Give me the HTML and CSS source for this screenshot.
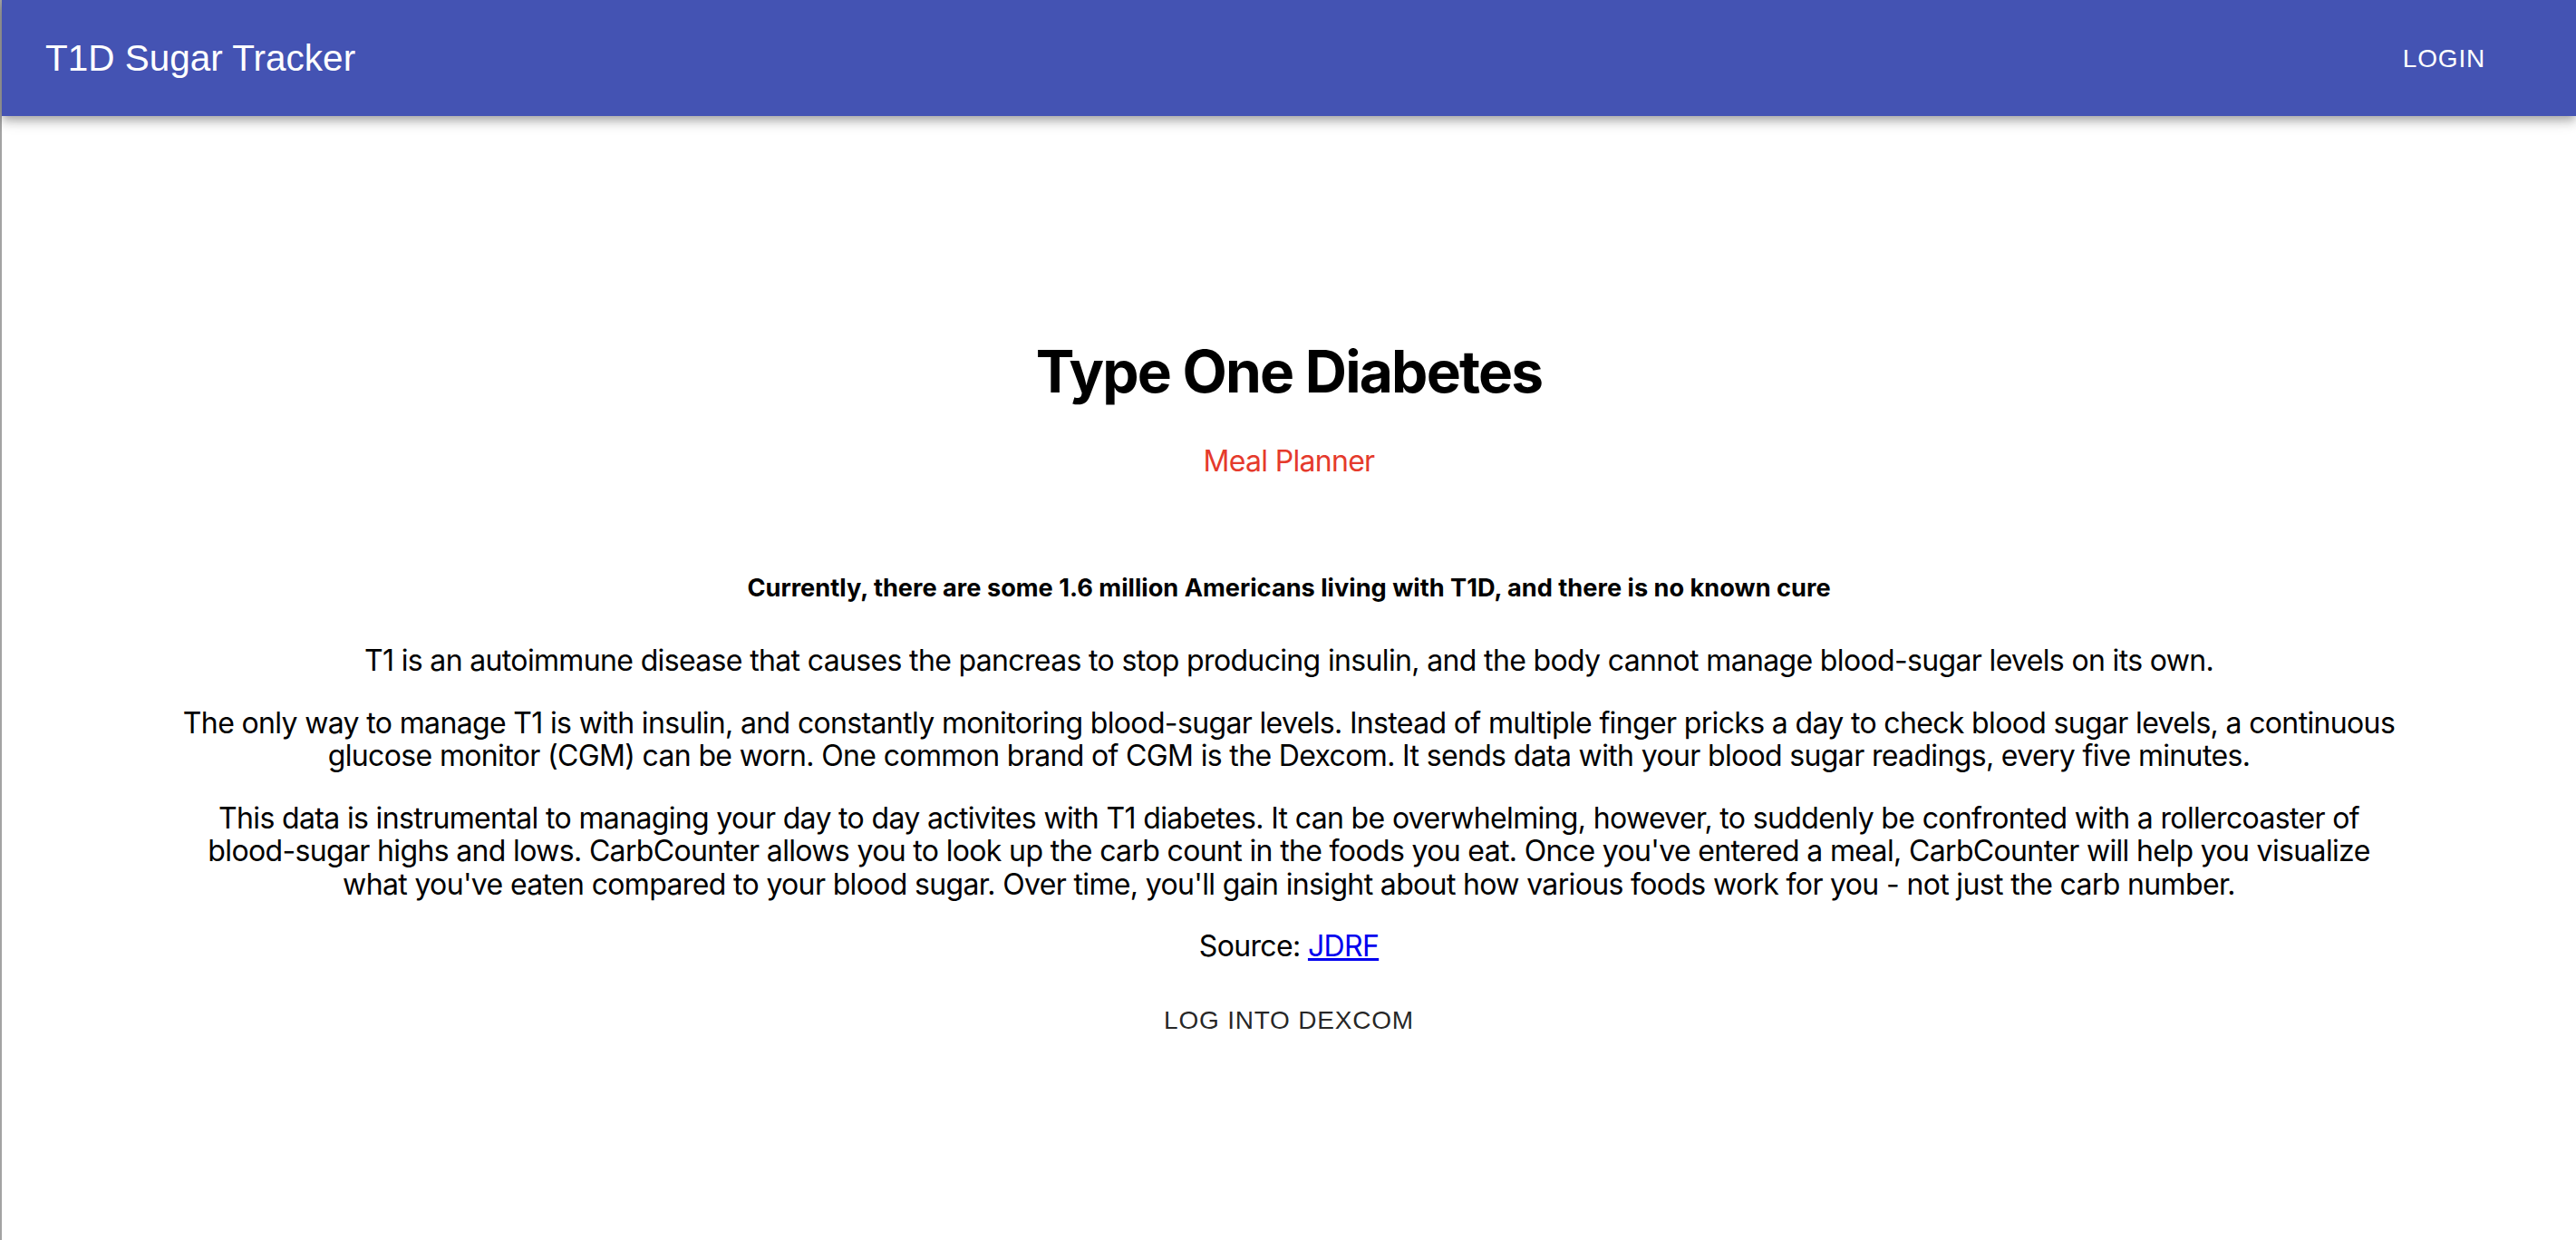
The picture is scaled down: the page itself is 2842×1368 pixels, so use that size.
FILE: index.html
```html
<!DOCTYPE html>
<html lang="en">
<head>
<meta charset="utf-8">
<title>T1D Sugar Tracker</title>
<link rel="stylesheet" href="styles.css">
</head>
<body>
<div class="frame">
  <header class="appbar">
    <h6 class="brand">T1D Sugar Tracker</h6>
    <button class="nav-btn">Login</button>
  </header>
  <main class="content">
    <h1 class="title">Type One Diabetes</h1>
    <a class="meal-link" href="#">Meal Planner</a>
    <h5 class="lead">Currently, there are some 1.6 million Americans living with T1D, and there is no known cure</h5>
    <p class="para">T1 is an autoimmune disease that causes the pancreas to stop producing insulin, and the body cannot manage blood-sugar levels on its own.</p>
    <p class="para">The only way to manage T1 is with insulin, and constantly monitoring blood-sugar levels. Instead of multiple finger pricks a day to check blood sugar levels, a continuous glucose monitor (CGM) can be worn. One common brand of CGM is the Dexcom. It sends data with your blood sugar readings, every five minutes.</p>
    <p class="para">This data is instrumental to managing your day to day activites with T1 diabetes. It can be overwhelming, however, to suddenly be confronted with a rollercoaster of blood-sugar highs and lows. CarbCounter allows you to look up the carb count in the foods you eat. Once you've entered a meal, CarbCounter will help you visualize what you've eaten compared to your blood sugar. Over time, you'll gain insight about how various foods work for you - not just the carb number.</p>
    <p class="para">Source: <a class="src-link" href="#">JDRF</a></p>
    <button class="text-btn">Log into Dexcom</button>
  </main>
</div>
</body>
</html>
```

FILE: styles.css
```css
html, body {
  margin: 0;
  padding: 0;
  background: #ffffff;
}

body {
  font-family: Inter, "Noto Sans", sans-serif;
  color: #000;
}

.frame {
  min-height: 1368px;
  border-left: 2px solid #a3a3a3;
  box-sizing: border-box;
}

.appbar {
  height: 128px;
  background: #4453b3;
  display: flex;
  align-items: center;
  justify-content: space-between;
  padding: 0 68px 0 48px;
  box-shadow: 0 4px 8px -2px rgba(0,0,0,0.2), 0 8px 10px 0 rgba(0,0,0,0.14), 0 2px 20px 0 rgba(0,0,0,0.12);
  position: relative;
  z-index: 1;
}

.brand {
  margin: 0;
  font-family: "Liberation Sans", Arial, sans-serif;
  font-size: 40.5px;
  font-weight: 400;
  color: #fff;
  line-height: 1.6;
}

.nav-btn {
  background: none;
  border: 0;
  color: #fff;
  font-family: "Liberation Sans", Arial, sans-serif;
  font-size: 28px;
  letter-spacing: 0.8px;
  text-transform: uppercase;
  padding: 12px 32px;
  line-height: 1.75;
}

.content {
  display: flex;
  flex-direction: column;
  align-items: center;
  text-align: center;
  padding: 244px 150px 0;
}

.title {
  margin: 0 0 42px;
  font-size: 64px;
  line-height: 76px;
  font-weight: 700;
  letter-spacing: -1.8px;
}

.meal-link {
  font-size: 32px;
  line-height: 38px;
  color: #e53a2c;
  text-decoration: none;
  letter-spacing: -0.7px;
}

.lead {
  margin: 105px 0 46px;
  font-size: 27.2px;
  line-height: 32px;
  font-weight: 700;
  letter-spacing: 0;
}

.para {
  margin: 0 0 32px;
  font-size: 32px;
  line-height: 36.5px;
  letter-spacing: -0.65px;
  max-width: 2456px;
}

.src-link {
  color: #0000ee;
}

.text-btn {
  background: none;
  border: 0;
  color: rgba(0,0,0,0.87);
  font-family: "Liberation Sans", Arial, sans-serif;
  font-size: 28px;
  letter-spacing: 0.8px;
  text-transform: uppercase;
  padding: 12px 32px;
  line-height: 1.75;
  margin-top: -6px;
}
```
